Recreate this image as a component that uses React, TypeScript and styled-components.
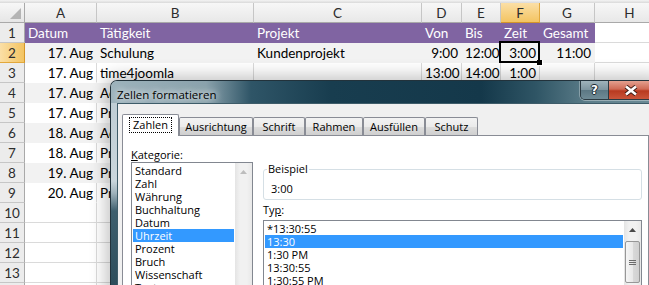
import React from "react";
import styled, { createGlobalStyle } from "styled-components";

const GlobalStyle = createGlobalStyle`
  html, body { margin: 0; padding: 0; background: #fff; }
  body { width: 649px; height: 285px; overflow: hidden; }
`;

type Tone = "head" | "band" | "plain" | "free";

const COLS = ["A", "B", "C", "D", "E", "F", "G", "H"];

const DATA: string[][] = [
  ["Datum", "Tätigkeit", "Projekt", "Von", "Bis", "Zeit", "Gesamt"],
  ["17. Aug", "Schulung", "Kundenprojekt", "9:00", "12:00", "3:00", "11:00"],
  ["17. Aug", "time4joomla", "", "13:00", "14:00", "1:00", ""],
  ["17. Aug", "Administration", "Intern", "14:00", "16:00", "2:00", ""],
  ["17. Aug", "Programmierung", "Kundenprojekt", "16:00", "18:00", "2:00", "5:00"],
  ["18. Aug", "Administration", "Intern", "9:00", "10:00", "1:00", ""],
  ["18. Aug", "Programmierung", "Kundenprojekt", "10:00", "17:00", "7:00", "8:00"],
  ["19. Aug", "Programmierung", "Kundenprojekt", "9:00", "17:00", "8:00", "8:00"],
  ["20. Aug", "Programmierung", "Kundenprojekt", "9:00", "13:00", "4:00", "4:00"],
];

const TOTAL_ROWS = 14;

const TABS = [
  { label: "Zahlen", w: 57 },
  { label: "Ausrichtung", w: 74 },
  { label: "Schrift", w: 52 },
  { label: "Rahmen", w: 58 },
  { label: "Ausfüllen", w: 62 },
  { label: "Schutz", w: 53 },
];

const CATEGORIES = [
  "Standard",
  "Zahl",
  "Währung",
  "Buchhaltung",
  "Datum",
  "Uhrzeit",
  "Prozent",
  "Bruch",
  "Wissenschaft",
  "Text",
  "Sonderformat",
];

const TYPES = ["*13:30:55", "13:30", "1:30 PM", "13:30:55", "1:30:55 PM", "30:55,2", "37:30:55"];

const fills: Record<Tone, string> = {
  head: "#8064a2",
  band: "#f2f2f2",
  plain: "#ffffff",
  free: "#ffffff",
};

const App: React.FC = () => {
  const rows = Array.from({ length: TOTAL_ROWS }, (_, i) => i + 1);

  const toneFor = (row: number, col: number): Tone => {
    if (col > 6 || row > DATA.length) return "free";
    if (row === 1) return "head";
    return row % 2 === 0 ? "band" : "plain";
  };

  return (
    <Screen>
      <GlobalStyle />
      <TopStrip />
      <Sheet>
        <Corner>
          <svg width="11" height="11" viewBox="0 0 11 11">
            <path d="M11 0 L11 11 L0 11 Z" fill="#b4b4b4" />
          </svg>
        </Corner>
        {COLS.map((c) => (
          <ColHead key={c} $active={c === "F"}>
            {c}
          </ColHead>
        ))}
        {rows.map((r) => (
          <React.Fragment key={r}>
            <RowHead $active={r === 2}>{r}</RowHead>
            {COLS.map((c, ci) => {
              const tone = toneFor(r, ci);
              const text = DATA[r - 1]?.[ci] ?? "";
              const right = r > 1 && (ci === 0 || (ci >= 3 && ci <= 6));
              return (
                <Cell key={c} $tone={tone} $right={right} $active={r === 2 && c === "F"}>
                  {text}
                </Cell>
              );
            })}
          </React.Fragment>
        ))}
      </Sheet>

      <Dialog>
        <TitleBar>
          <Title>Zellen formatieren</Title>
          <CaptionButtons>
            <HelpButton>?</HelpButton>
            <CloseButton>
              <svg width="14" height="11" viewBox="0 0 14 11">
                <path d="M2 1.5 L12 9.5 M12 1.5 L2 9.5" stroke="#3a1a12" strokeWidth="4.4" />
                <path d="M2 1.5 L12 9.5 M12 1.5 L2 9.5" stroke="#ffffff" strokeWidth="2.6" />
              </svg>
            </CloseButton>
          </CaptionButtons>
        </TitleBar>
        <Client>
          <TabStrip>
            {TABS.map((t, i) => (
              <Tab key={t.label} $w={t.w} $selected={i === 0}>
                {i === 0 ? <Focus>{t.label}</Focus> : t.label}
              </Tab>
            ))}
          </TabStrip>
          <Panel>
            <LeftColumn>
              <Label>
                <u>K</u>ategorie:
              </Label>
              <ListBox $h={150}>
                <Items>
                  {CATEGORIES.map((c) => (
                    <Item key={c} $selected={c === "Uhrzeit"}>
                      {c}
                    </Item>
                  ))}
                </Items>
                <ScrollBar>
                  <ScrollArrow>
                    <svg width="7" height="4" viewBox="0 0 7 4">
                      <path d="M0 4 L3.5 0 L7 4 Z" fill="#bdbdbd" />
                    </svg>
                  </ScrollArrow>
                </ScrollBar>
              </ListBox>
            </LeftColumn>
            <RightColumn>
              <Group>
                <Legend>Beispiel</Legend>
                <Sample>3:00</Sample>
              </Group>
              <Label $gap={3}>
                Ty<u>p</u>:
              </Label>
              <ListBox $h={110}>
                <Items>
                  {TYPES.map((t, i) => (
                    <Item key={i} $selected={i === 1}>
                      {t}
                    </Item>
                  ))}
                </Items>
                <ScrollBar>
                  <ScrollArrow>
                    <svg width="7" height="4" viewBox="0 0 7 4">
                      <path d="M0 4 L3.5 0 L7 4 Z" fill="#4a4a4a" />
                    </svg>
                  </ScrollArrow>
                  <Thumb>
                    <svg width="7" height="5" viewBox="0 0 7 5">
                      <path d="M0 0.5 H7 M0 2.5 H7 M0 4.5 H7" stroke="#6b6b6b" strokeWidth="1" />
                    </svg>
                  </Thumb>
                </ScrollBar>
              </ListBox>
            </RightColumn>
          </Panel>
        </Client>
      </Dialog>
    </Screen>
  );
};

export default App;

const Screen = styled.div`
  position: relative;
  width: 649px;
  height: 285px;
  overflow: hidden;
  background: #fff;
  font-family: Lato, "Liberation Sans", sans-serif;
`;

const TopStrip = styled.div`
  height: 3px;
  background: linear-gradient(#f4f4f4, #d9d9d9);
`;

const Sheet = styled.div`
  display: grid;
  grid-template-columns: 25px 72px 157px 168px 40px 39px 39px 55px 70px;
  grid-auto-rows: 20px;
  font-size: 13.5px;
`;

const Corner = styled.div`
  display: flex;
  align-items: flex-end;
  justify-content: flex-end;
  padding: 0 3px 3px 0;
  background: linear-gradient(#f7f7f7, #e6e6e6);
  border-right: 1px solid #a9a9a9;
  border-bottom: 1px solid #a9a9a9;
`;

const ColHead = styled.div<{ $active?: boolean }>`
  display: flex;
  align-items: center;
  justify-content: center;
  color: #2c2c2c;
  background: ${(p) => (p.$active ? "linear-gradient(#fbdfa6, #f3c462)" : "linear-gradient(#f7f7f7, #e8e8e8)")};
  border-right: 1px solid ${(p) => (p.$active ? "#e2a83c" : "#c6c6c6")};
  border-bottom: 1px solid ${(p) => (p.$active ? "#d4962a" : "#a9a9a9")};
`;

const RowHead = styled.div<{ $active?: boolean }>`
  display: flex;
  align-items: center;
  justify-content: center;
  color: #2c2c2c;
  background: ${(p) => (p.$active ? "linear-gradient(90deg, #fbdfa6, #f3c462)" : "#ececec")};
  border-right: 1px solid ${(p) => (p.$active ? "#d4962a" : "#a9a9a9")};
  border-bottom: 1px solid ${(p) => (p.$active ? "#e2a83c" : "#c6c6c6")};
`;

const Cell = styled.div<{ $tone: Tone; $right?: boolean; $active?: boolean }>`
  position: relative;
  padding: 0 3px;
  line-height: 20px;
  white-space: nowrap;
  overflow: ${(p) => (p.$active ? "visible" : "hidden")};
  z-index: ${(p) => (p.$active ? 1 : 0)};
  text-align: ${(p) => (p.$right ? "right" : "left")};
  color: ${(p) => (p.$tone === "head" ? "#fff" : "#000")};
  background: ${(p) => fills[p.$tone]};
  border-right: 1px solid
    ${(p) => (p.$tone === "head" ? "#8064a2" : p.$tone === "band" ? "#f2f2f2" : "#dadada")};
  border-bottom: 1px solid
    ${(p) => (p.$tone === "head" ? "#8064a2" : p.$tone === "band" ? "#f2f2f2" : p.$tone === "plain" ? "#fff" : "#dadada")};

  ${(p) =>
    p.$active &&
    `
    &::after {
      content: "";
      position: absolute;
      left: -2px;
      top: -2px;
      right: -1px;
      bottom: -1px;
      border: 2px solid #000;
    }
    &::before {
      content: "";
      position: absolute;
      right: -4px;
      bottom: -4px;
      width: 5px;
      height: 5px;
      background: #000;
      border: 1px solid #fff;
      border-top: none;
      border-left: none;
      z-index: 2;
    }
  `}
`;

const Dialog = styled.section`
  position: absolute;
  left: 110px;
  top: 80px;
  width: 549px;
  height: 240px;
  box-sizing: border-box;
  display: flex;
  flex-direction: column;
  padding: 0 6px;
  border: 1px solid #22323b;
  border-bottom: none;
  border-radius: 7px 7px 0 0;
  background: linear-gradient(180deg, #bccbd2 0px, #cad6dc 100px, #9fb2bb 112px, #3e5f6e 130px, #2d4d5b 205px);
  box-shadow: 0 0 16px 5px rgba(0, 0, 0, 0.22);
  font-family: "Open Sans", "Noto Sans", sans-serif;
  font-size: 11px;
  color: #000;
`;

const TitleBar = styled.div`
  display: flex;
  align-items: flex-start;
  height: 25px;
  margin: 0 -6px;
  padding-left: 6px;
  border-radius: 6px 6px 0 0;
  background: linear-gradient(
    90deg,
    #9db3bc 0px,
    #8aa2ac 95px,
    #2f5567 140px,
    #183d4f 220px,
    #14384a 370px,
    #2f5565 425px,
    #5e7f8b 480px,
    #6d8c97 549px
  );
`;

const Title = styled.div`
  margin-top: 6px;
  line-height: 16px;
  font-size: 11.5px;
  color: #000;
  text-shadow: 0 0 6px #fff, 0 0 10px rgba(255, 255, 255, 0.8);
`;

const CaptionButtons = styled.div`
  display: flex;
  margin-left: auto;
  margin-right: 5px;
  height: 18px;
  border: 1px solid #2b3a42;
  border-top: none;
  border-radius: 0 0 5px 5px;
  overflow: hidden;
  box-shadow: 0 1px 0 rgba(255, 255, 255, 0.35), -1px 0 0 rgba(255, 255, 255, 0.3);
`;

const HelpButton = styled.div`
  width: 27px;
  display: flex;
  align-items: center;
  justify-content: center;
  border-right: 1px solid #2b3a42;
  background: linear-gradient(#9fb3bb, #7d959f 50%, #5c7884 51%, #6f8b96);
  color: #fff;
  font-family: "DejaVu Sans", sans-serif;
  font-weight: 700;
  font-size: 12px;
  text-shadow: 0 0 1px #1c2a31, 1px 0 0 #1c2a31, -1px 0 0 #1c2a31, 0 1px 0 #1c2a31, 0 -1px 0 #1c2a31;
`;

const CloseButton = styled.div`
  width: 43px;
  display: flex;
  align-items: center;
  justify-content: center;
  background: linear-gradient(#e3a08f, #cf6a55 45%, #b83a20 55%, #c9553a);
`;

const Client = styled.div`
  flex: 1;
  display: flex;
  flex-direction: column;
  padding: 10px 2px 0 4px;
  background: #f0f0f0;
  border: 1px solid #3e5c69;
  border-bottom: none;
`;

const TabStrip = styled.div`
  display: flex;
  align-items: flex-end;
  height: 22px;
  margin-bottom: -1px;
  position: relative;
  z-index: 1;
`;

const Tab = styled.div<{ $w: number; $selected?: boolean }>`
  box-sizing: border-box;
  width: ${(p) => p.$w}px;
  height: ${(p) => (p.$selected ? 22 : 18)}px;
  margin-bottom: ${(p) => (p.$selected ? 0 : 1)}px;
  display: flex;
  align-items: center;
  justify-content: center;
  padding-bottom: ${(p) => (p.$selected ? 1 : 0)}px;
  border: 1px solid #898c95;
  border-bottom: none;
  border-radius: 2px 2px 0 0;
  background: ${(p) => (p.$selected ? "#fff" : "linear-gradient(#f3f3f3, #ebebeb 50%, #dddddd 51%, #cfcfcf)")};
  line-height: 14px;
  white-space: nowrap;
`;

const Focus = styled.span`
  padding: 0 3px;
  border: 1px dotted #000;
`;

const Panel = styled.div`
  flex: 1;
  display: flex;
  align-items: flex-start;
  gap: 10px;
  padding: 12px 6px 0 8px;
  background: #fff;
  border: 1px solid #898c95;
`;

const LeftColumn = styled.div`
  width: 122px;
  display: flex;
  flex-direction: column;
`;

const RightColumn = styled.div`
  flex: 1;
  display: flex;
  flex-direction: column;
`;

const Label = styled.div<{ $gap?: number }>`
  line-height: 14px;
  margin-top: ${(p) => p.$gap ?? 0}px;
  margin-bottom: ${(p) => p.$gap ?? 0}px;
  white-space: nowrap;
`;

const ListBox = styled.div<{ $h: number }>`
  display: flex;
  height: ${(p) => p.$h}px;
  border: 1px solid #828790;
  background: #fff;
`;

const Items = styled.div`
  flex: 1;
  min-width: 0;
  padding: 1px 1px 1px 1px;
`;

const Item = styled.div<{ $selected?: boolean }>`
  height: 13px;
  line-height: 13px;
  padding-left: 2px;
  white-space: nowrap;
  color: ${(p) => (p.$selected ? "#fff" : "#000")};
  background: ${(p) => (p.$selected ? "#3399ff" : "transparent")};
`;

const ScrollBar = styled.div`
  width: 17px;
  display: flex;
  flex-direction: column;
  background: linear-gradient(90deg, #e4e4e4, #f1f1f1 30%, #f1f1f1 70%, #e8e8e8);
`;

const ScrollArrow = styled.div`
  height: 17px;
  display: flex;
  align-items: center;
  justify-content: center;
`;

const Thumb = styled.div`
  height: 40px;
  margin: 3px 1px 0;
  display: flex;
  align-items: center;
  justify-content: center;
  border: 1px solid #979797;
  border-radius: 2px;
  background: linear-gradient(90deg, #f5f5f5, #e9e9e9 50%, #d9d9d9 51%, #d0d0d0);
`;

const Group = styled.fieldset`
  margin: 15px 0 0;
  padding: 7px 7px 3px;
  min-width: 0;
  border: 1px solid #d5dfe5;
  border-radius: 3px;
`;

const Legend = styled.legend`
  margin-left: -4px;
  padding: 0 1px;
  line-height: 12px;
`;

const Sample = styled.div`
  line-height: 14px;
`;
